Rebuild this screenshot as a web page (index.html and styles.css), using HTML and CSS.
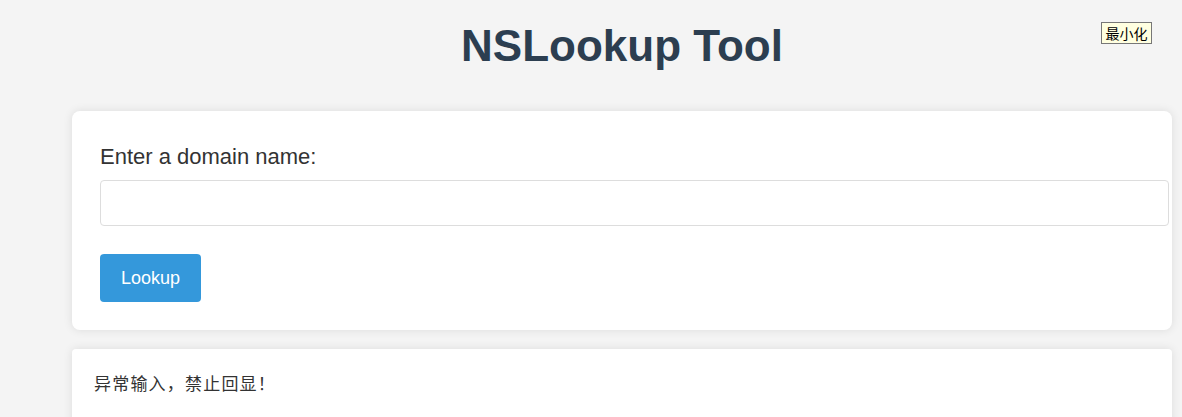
FILE: index.html
```html
<!DOCTYPE html>
<html lang="zh">
<head>
<meta charset="utf-8">
<title>NSLookup Tool</title>
<link rel="stylesheet" href="styles.css">
</head>
<body>
<button class="minimize">最小化</button>
<div class="container">
  <h1 class="title">NSLookup Tool</h1>
  <form class="card form-card">
    <label class="label" for="domain">Enter a domain name:</label>
    <input class="input" id="domain" type="text">
    <button class="btn" type="button">Lookup</button>
  </form>
  <div class="card result-card">
    <p class="result">异常输入，禁止回显！</p>
  </div>
</div>
</body>
</html>
```

FILE: styles.css
```css
* { box-sizing: content-box; }
html, body { margin: 0; padding: 0; }
body {
  background: #f4f4f4;
  font-family: "Liberation Sans", Arial, "Noto Sans CJK SC", sans-serif;
  color: #333;
  overflow: hidden;
}
.container {
  width: 1100px;
  margin-left: 72px;
}
.title {
  margin: 0;
  padding-top: 20px;
  height: 111px;
  box-sizing: border-box;
  text-align: center;
  font-size: 44px;
  line-height: 52px;
  font-weight: bold;
  color: #2c3e50;
}
.card {
  background: #fff;
  border-radius: 8px;
  box-shadow: 0 0 10px rgba(0,0,0,0.1);
}
.form-card {
  display: block;
  margin: 0;
  padding: 28px 28px 28px;
  height: 163px;
}
.label {
  display: block;
  font-size: 22px;
  line-height: 34px;
  margin-top: 1px;
  color: #333;
}
.input {
  display: block;
  width: calc(100% - 1px);
  height: 20px;
  padding: 12px;
  margin-top: 6px;
  border: 1px solid #ddd;
  border-radius: 4px;
  font-size: 16px;
  outline: none;
}
.btn {
  display: block;
  margin-top: 28px;
  width: 101px;
  height: 48px;
  background: #3498db;
  color: #fff;
  border: none;
  border-radius: 4px;
  font-family: "Liberation Sans", Arial, sans-serif;
  font-size: 18px;
  padding: 0;
}
.result-card {
  margin-top: 19px;
  padding: 22px 22px;
  border-radius: 4px 4px 0 0;
  height: 80px;
}
.result {
  margin: 0;
  font-family: "Noto Sans CJK SC", sans-serif;
  font-size: 17px;
  letter-spacing: 1.2px;
  line-height: 24px;
  color: #333;
}
.minimize {
  position: absolute;
  top: 22px;
  left: 1101px;
  width: 51px;
  height: 22px;
  padding: 0;
  background: #ffffe0;
  border: 1px solid #777;
  border-radius: 0;
  font-family: "Noto Sans CJK SC", sans-serif;
  font-size: 14px;
  line-height: 18px;
  color: #000;
  box-sizing: border-box;
}
```
